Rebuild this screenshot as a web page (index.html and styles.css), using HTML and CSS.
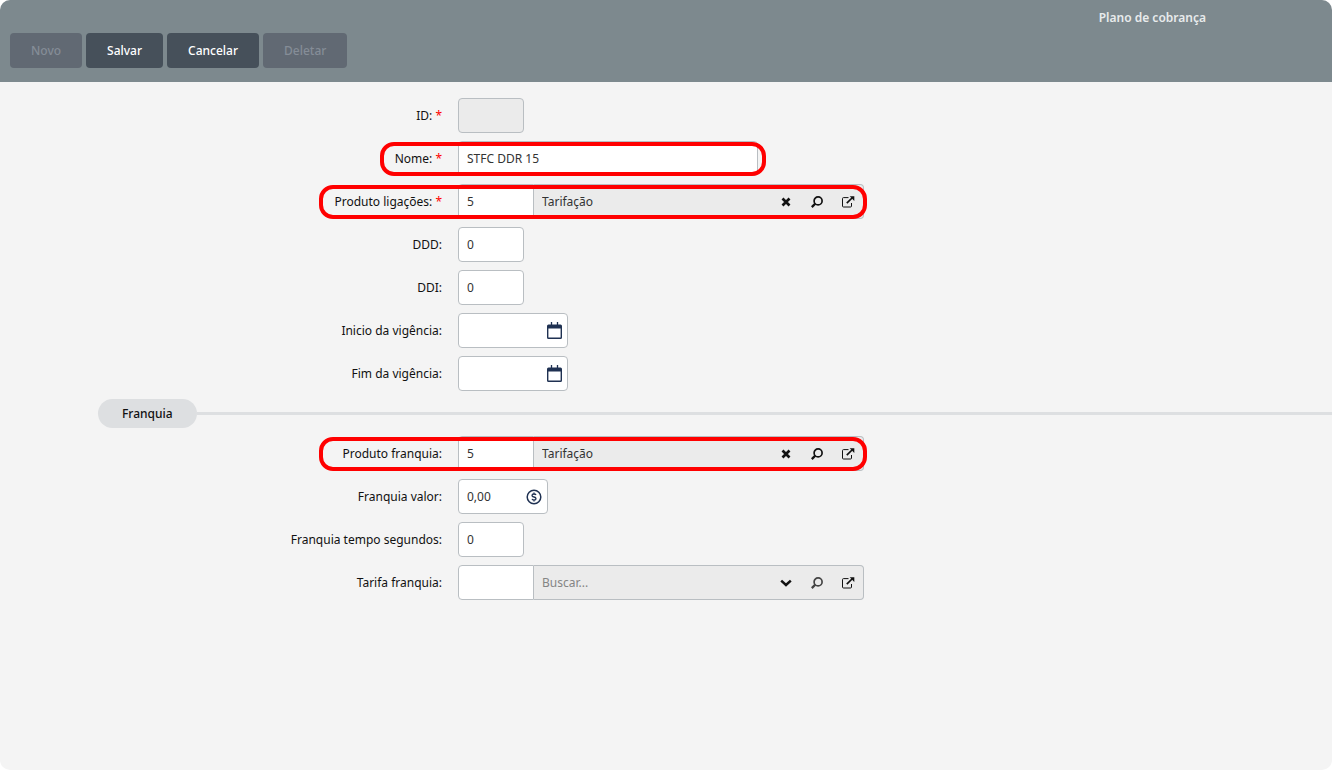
FILE: index.html
```html
<!DOCTYPE html>
<html lang="pt-BR">
<head>
<meta charset="utf-8">
<title>Plano de cobrança</title>
<link rel="stylesheet" href="styles.css">
</head>
<body>
<svg class="sprite" aria-hidden="true">
  <symbol id="clear" viewBox="0 0 10 10"><path d="M1.500 1.500 8.500 8.500M8.500 1.500 1.500 8.500" fill="none" stroke="currentColor" stroke-width="2.700"/></symbol>
  <symbol id="search" viewBox="0 0 12 12"><circle cx="7.100" cy="4.900" r="4" fill="none" stroke="currentColor" stroke-width="1.700"/><path d="M4.300 7.600.8 11.100" fill="none" stroke="currentColor" stroke-width="2.200"/></symbol>
  <symbol id="open" viewBox="0 0 14 12"><path d="M7.500 1.600H2.500Q1.500 1.600 1.500 2.600V10Q1.500 11 2.500 11H9.500Q10.500 11 10.500 10V7" fill="none" stroke="currentColor" stroke-width="1"/><path d="M5.800 7.200 11 2" fill="none" stroke="currentColor" stroke-width="1.700"/><path d="M8.700.3H13.300V4.900Z" fill="currentColor"/></symbol>
  <symbol id="down" viewBox="0 0 12 8"><path d="M1.200 1.600 6 6 10.800 1.600" fill="none" stroke="currentColor" stroke-width="2.500"/></symbol>
  <symbol id="calendar" viewBox="0 0 15 18"><path d="M1.500 2.500H13.500Q15 2.500 15 4V15.500Q15 17 13.500 17H1.500Q0 17 0 15.500V4Q0 2.500 1.500 2.500ZM1.400 6.500V15.600H13.600V6.500Z" fill="currentColor" fill-rule="evenodd"/><path d="M4.500 0V4M10.500 0V4" stroke="currentColor" stroke-width="1.300"/></symbol>
  <symbol id="money" viewBox="0 0 16 16"><circle cx="8" cy="8" r="6.800" fill="none" stroke="currentColor" stroke-width="1.500"/><path d="M10 6Q9.500 5 8 5 6 5 6 6.400 6 7.600 8 8 10 8.400 10 9.700 10 11 8 11 6.400 11 6 9.900M8 3.500V5M8 11V12.500" fill="none" stroke="currentColor" stroke-width="1.300"/></symbol>
</svg>
<main class="window">
  <header class="toolbar">
    <h1 class="title">Plano de cobrança</h1>
    <div class="actions">
      <button class="button" type="button" disabled>Novo</button>
      <button class="button" type="button">Salvar</button>
      <button class="button" type="button">Cancelar</button>
      <button class="button" type="button" disabled>Deletar</button>
    </div>
  </header>
  <form class="form">
    <div class="row">
      <label class="label" for="id">ID: <span class="required">*</span></label>
      <div class="control short"><input class="input" id="id" disabled></div>
    </div>
    <div class="row">
      <label class="label" for="nome">Nome: <span class="required">*</span></label>
      <div class="control long"><input class="input" id="nome" value="STFC DDR 15"><span class="mark mark-name"></span></div>
    </div>
    <div class="row">
      <label class="label" for="produto">Produto ligações: <span class="required">*</span></label>
      <div class="control lookup">
        <input class="input code" id="produto" value="5">
        <div class="picker">
          <input class="description" aria-label="Descrição do produto ligações" value="Tarifação">
          <button class="tool" type="button" aria-label="Limpar"><svg class="icon-clear"><use href="#clear"/></svg></button>
          <button class="tool" type="button" aria-label="Pesquisar"><svg class="icon-search"><use href="#search"/></svg></button>
          <button class="tool" type="button" aria-label="Abrir"><svg class="icon-open"><use href="#open"/></svg></button>
        </div>
        <span class="mark mark-lookup"></span>
      </div>
    </div>
    <div class="row">
      <label class="label" for="ddd">DDD:</label>
      <div class="control short"><input class="input" id="ddd" value="0"></div>
    </div>
    <div class="row">
      <label class="label" for="ddi">DDI:</label>
      <div class="control short"><input class="input" id="ddi" value="0"></div>
    </div>
    <div class="row">
      <label class="label" for="inicio">Inicio da vigência:</label>
      <div class="control date"><input class="input" id="inicio"><button class="inside" type="button" aria-label="Escolher início"><svg class="icon-calendar"><use href="#calendar"/></svg></button></div>
    </div>
    <div class="row">
      <label class="label" for="fim">Fim da vigência:</label>
      <div class="control date"><input class="input" id="fim"><button class="inside" type="button" aria-label="Escolher fim"><svg class="icon-calendar"><use href="#calendar"/></svg></button></div>
    </div>
    <h2 class="section"><span class="pill">Franquia</span></h2>
    <div class="row">
      <label class="label" for="produto-franquia">Produto franquia:</label>
      <div class="control lookup">
        <input class="input code" id="produto-franquia" value="5">
        <div class="picker">
          <input class="description" aria-label="Descrição do produto franquia" value="Tarifação">
          <button class="tool" type="button" aria-label="Limpar"><svg class="icon-clear"><use href="#clear"/></svg></button>
          <button class="tool" type="button" aria-label="Pesquisar"><svg class="icon-search"><use href="#search"/></svg></button>
          <button class="tool" type="button" aria-label="Abrir"><svg class="icon-open"><use href="#open"/></svg></button>
        </div>
        <span class="mark mark-lookup"></span>
      </div>
    </div>
    <div class="row">
      <label class="label" for="valor">Franquia valor:</label>
      <div class="control money"><input class="input" id="valor" value="0,00"><span class="inside"><svg class="icon-money"><use href="#money"/></svg></span></div>
    </div>
    <div class="row">
      <label class="label" for="tempo">Franquia tempo segundos:</label>
      <div class="control short"><input class="input" id="tempo" value="0"></div>
    </div>
    <div class="row">
      <label class="label" for="tarifa">Tarifa franquia:</label>
      <div class="control lookup">
        <input class="input code" id="tarifa">
        <div class="picker">
          <input class="description" aria-label="Descrição da tarifa franquia" placeholder="Buscar...">
          <button class="tool" type="button" aria-label="Expandir"><svg class="icon-down"><use href="#down"/></svg></button>
          <button class="tool muted" type="button" aria-label="Pesquisar"><svg class="icon-search"><use href="#search"/></svg></button>
          <button class="tool" type="button" aria-label="Abrir"><svg class="icon-open"><use href="#open"/></svg></button>
        </div>
      </div>
    </div>
  </form>
</main>
</body>
</html>
```
FILE: styles.css
```css
* { box-sizing: border-box; }
body {
  margin: 0;
  background: #fff;
  color: #111;
  font: 12px/17px "Noto Sans", "Open Sans", sans-serif;
}
input, button { font: inherit; color: inherit; }
.sprite { position: absolute; width: 0; height: 0; }
.window {
  min-height: 100vh;
  overflow: hidden;
  background: #f4f4f4;
  border-radius: 10px;
}
.toolbar { padding: 9px 10px 14px; background: #7d898e; }
.title {
  margin: 0 116px 7px 0;
  text-align: right;
  color: #e8ebec;
  font-size: 12px;
  font-weight: 600;
  line-height: 17px;
}
.actions { display: flex; gap: 4px; }
.button {
  height: 35px;
  padding: 0 21px;
  border: 0;
  border-radius: 4px;
  background: #46505a;
  color: #fff;
  font-weight: 500;
}
.button:disabled { background: #616973; color: #858d97; }
.form { display: flex; flex-direction: column; gap: 8px; padding: 16px 0; }
.row { display: grid; grid-template-columns: 442px 1fr; column-gap: 16px; align-items: center; }
.label { text-align: right; }
.required { color: #f00; }
.control { position: relative; display: flex; height: 35px; }
.short { width: 66px; }
.long { width: 300px; }
.date { width: 110px; }
.money { width: 90px; }
.lookup { width: 406px; }
.input {
  width: 100%;
  min-width: 0;
  padding: 0 8px;
  border: 1px solid #b9bec2;
  border-radius: 4px;
  background: #fff;
  color: #333;
  outline: 0;
}
.input:disabled { background: #ebebeb; }
.code { flex: 0 0 76px; border-radius: 4px 0 0 4px; }
.picker {
  flex: 1;
  display: flex;
  align-items: center;
  min-width: 0;
  border: 1px solid #b9bec2;
  border-left: 0;
  border-radius: 0 4px 4px 0;
  background: #ebebeb;
}
.description {
  flex: 1;
  min-width: 0;
  padding: 0 8px;
  border: 0;
  background: none;
  color: #333;
  outline: 0;
}
.description::placeholder { color: #858585; opacity: 1; }
.tool {
  display: grid;
  place-items: center;
  width: 31px;
  height: 31px;
  padding: 0;
  border: 0;
  background: none;
}
.muted { color: #444; }
.inside {
  position: absolute;
  top: 0;
  right: 6px;
  height: 35px;
  display: grid;
  place-items: center;
  padding: 0;
  border: 0;
  background: none;
  color: #1f3152;
}
.icon-clear { width: 10px; height: 10px; }
.icon-search { width: 12px; height: 12px; }
.icon-open { width: 14px; height: 12px; }
.icon-down { width: 12px; height: 8px; }
.icon-calendar { width: 15px; height: 18px; }
.icon-money { width: 16px; height: 16px; }
.mark {
  position: absolute;
  top: 1px;
  height: 34px;
  border: 4px solid #f00;
  border-radius: 14px;
  pointer-events: none;
}
.mark-name { left: -78px; right: -8px; }
.mark-lookup { left: -139px; right: -3px; }
.section {
  display: flex;
  align-items: center;
  margin: 0 0 0 98px;
  font-size: 12px;
  font-weight: 500;
}
.section::after { content: ""; flex: 1; height: 3px; background: #dddfe1; }
.pill { padding: 6px 24px; border-radius: 15px; background: #dddfe1; }
```
